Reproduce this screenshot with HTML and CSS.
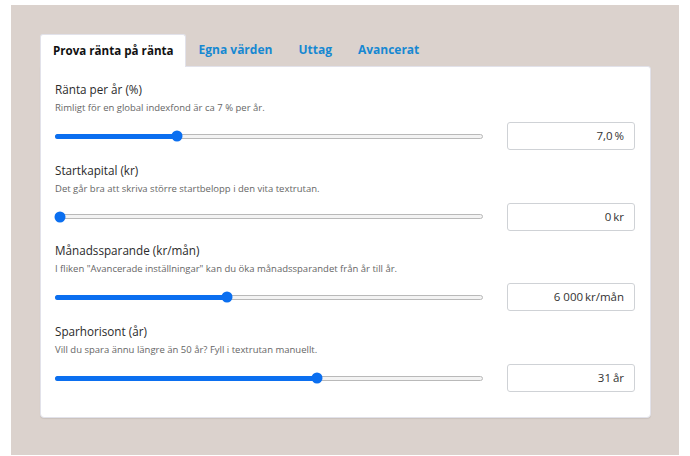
FILE: index.html
```html
<!DOCTYPE html>
<html lang="sv">
<head>
<meta charset="utf-8">
<link rel="stylesheet" href="styles.css">
</head>
<body>
<div class="frame">
  <div class="tabs">
    <div class="tab active">Prova ränta på ränta</div>
    <div class="tab">Egna värden</div>
    <div class="tab">Uttag</div>
    <div class="tab">Avancerat</div>
  </div>
  <div class="card">
    <div class="field">
      <div class="label">Ränta per år (%)</div>
      <div class="hint">Rimligt för en global indexfond är ca 7 % per år.</div>
      <div class="control">
        <div class="slider" style="--p:0.28"><div class="fill"></div><div class="thumb"></div></div>
        <div class="value">7,0&thinsp;%</div>
      </div>
    </div>
    <div class="field">
      <div class="label">Startkapital (kr)</div>
      <div class="hint">Det går bra att skriva större startbelopp i den vita textrutan.</div>
      <div class="control">
        <div class="slider" style="--p:0"><div class="fill"></div><div class="thumb"></div></div>
        <div class="value">0&thinsp;kr</div>
      </div>
    </div>
    <div class="field">
      <div class="label">Månadssparande (kr/mån)</div>
      <div class="hint">I fliken "Avancerade inställningar" kan du öka månadssparandet från år till år.</div>
      <div class="control">
        <div class="slider" style="--p:0.4"><div class="fill"></div><div class="thumb"></div></div>
        <div class="value">6&nbsp;000&thinsp;kr/mån</div>
      </div>
    </div>
    <div class="field">
      <div class="label">Sparhorisont (år)</div>
      <div class="hint">Vill du spara ännu längre än 50 år? Fyll i textrutan manuellt.</div>
      <div class="control">
        <div class="slider" style="--p:0.615"><div class="fill"></div><div class="thumb"></div></div>
        <div class="value">31&thinsp;år</div>
      </div>
    </div>
  </div>
</div>
</body>
</html>
```

FILE: styles.css
```css
html, body {
  margin: 0;
  padding: 0;
  background: #ffffff;
}
body {
  padding: 5px 11px 1px 11px;
  font-family: "Open Sans", "Noto Sans", sans-serif;
  color: #2b2b2b;
}
.frame {
  background: #dbd2cd;
  height: 450px;
  box-sizing: border-box;
  padding: 29px 28px 0 29px;
}
.tabs {
  display: flex;
  height: 32px;
  position: relative;
  z-index: 1;
}
.tab {
  padding: 0 13px;
  font-size: 12px;
  font-weight: 700;
  line-height: 32px;
  color: #1688d2;
  box-sizing: border-box;
}
.tab.active {
  background: #ffffff;
  color: #111111;
  border: 1px solid #e2e2ea;
  border-bottom: none;
  border-radius: 3px 3px 0 0;
  line-height: 31px;
  height: 33px;
  padding: 0 11px 0 12px;
  font-size: 11.6px;
}
.card {
  background: #ffffff;
  border: 1px solid #e2e2ea;
  border-radius: 0 3px 4px 4px;
  box-shadow: 0 1px 1px rgba(0,0,0,0.08);
  padding: 14px 15px 25px 14px;
  display: flex;
  flex-direction: column;
  gap: 11.7px;
}
.field {
  display: flex;
  flex-direction: column;
}
.label {
  font-size: 11.7px;
  line-height: 17px;
  color: #2b2b2b;
}
.hint {
  margin-top: 3px;
  font-size: 9.5px;
  line-height: 14px;
  color: #666666;
}
.control {
  margin-top: 7px;
  display: flex;
  align-items: center;
  gap: 24px;
}
.slider {
  flex: 1;
  position: relative;
  height: 3px;
  border: 1px solid #b9b9b9;
  background: #f3f3f3;
  border-radius: 3px;
}
.fill {
  position: absolute;
  left: -1px;
  top: -1px;
  height: 5px;
  width: calc(5px + (100% - 10px) * var(--p));
  background: #0b6ff0;
  border-radius: 3px 0 0 3px;
}
.thumb {
  position: absolute;
  top: 50%;
  left: calc(4px + (100% - 8px) * var(--p));
  width: 11px;
  height: 11px;
  border-radius: 50%;
  background: #0b6ff0;
  transform: translate(-50%, -50%);
}
.value {
  width: 128px;
  height: 28px;
  box-sizing: border-box;
  border: 1px solid #cfd2d6;
  border-radius: 3px;
  text-align: right;
  padding: 0 10px;
  font-size: 11.5px;
  line-height: 26px;
  color: #333333;
}
```
